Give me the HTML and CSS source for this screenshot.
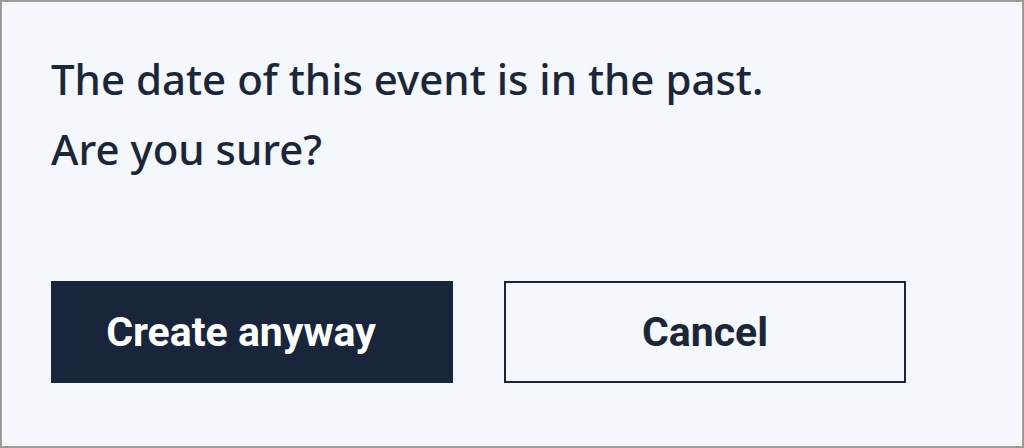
FILE: index.html
```html
<!DOCTYPE html>
<html lang="en">
<head>
    <meta charset="UTF-8">
    <meta name="viewport" content="width=device-width, initial-scale=1.0">
    <title>Confirm</title>
    <link rel="stylesheet" href="styles.css">
</head>
<body>
    <div class="dialog">
        <div class="message">
            <p>The date of this event is in the past.</p>
            <p>Are you sure?</p>
        </div>
        <div class="actions">
            <button class="btn btn-primary" type="button">Create anyway</button>
            <button class="btn btn-outline" type="button">Cancel</button>
        </div>
    </div>
</body>
</html>
```

FILE: styles.css
```css
body {
    margin: 0;
    padding: 0;
    background: #f4f7fb;
}

.dialog {
    box-sizing: border-box;
    width: 1024px;
    height: 448px;
    border: 2px solid #9c9c9c;
    box-shadow: inset 0 0 0 1px #ffffff;
    background: #f4f7fb;
    padding: 42px 49px 0;
}

.message p {
    margin: 0;
    font-family: "Noto Sans", sans-serif;
    font-weight: 500;
    font-size: 42px;
    line-height: 70px;
    color: #1b2638;
}

.actions {
    display: flex;
    gap: 51px;
    margin-top: 97px;
}

.btn {
    box-sizing: border-box;
    width: 402px;
    height: 102px;
    padding: 0;
    font-family: Roboto, sans-serif;
    font-weight: bold;
    font-size: 41px;
    border-radius: 0;
    cursor: pointer;
}

.btn-primary {
    background: #18253b;
    color: #ffffff;
    border: none;
    padding-right: 22px;
}

.btn-outline {
    background: transparent;
    color: #1b2638;
    border: 2px solid #1b2638;
}
```
